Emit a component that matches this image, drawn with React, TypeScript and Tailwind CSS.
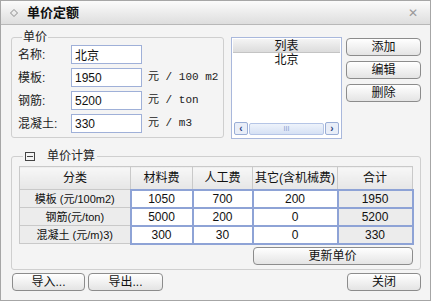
import React from "react";

const font = { fontFamily: '"Liberation Sans", "Noto Sans CJK SC", sans-serif' };

function Btn({ label, className = "" }: { label: string; className?: string }) {
  return (
    <button
      className={`h-[18px] rounded-[4px] border border-[#8c8c8c] bg-gradient-to-b from-[#ffffff] to-[#e4e4e4] text-[12px] leading-none text-[#111] ${className}`}
    >
      {label}
    </button>
  );
}

function Field({ label, value, unit }: { label: string; value: string; unit?: string }) {
  return (
    <div className="flex h-[19px] items-center">
      <span className="w-[53px] text-[12px] text-[#222]">{label}:</span>
      <input
        readOnly
        value={value}
        className="h-[19px] w-[71px] border border-[#9fb0d8] bg-white px-[3px] text-[12px] text-[#111] outline-none"
      />
      {unit && (
        <span className="ml-[6px] font-['Liberation_Mono','Noto_Sans_CJK_SC',monospace] text-[11px] text-[#222]">
          {unit}
        </span>
      )}
    </div>
  );
}

const rows = [
  { name: "模板 (元/100m2)", a: "1050", b: "700", c: "200", total: "1950" },
  { name: "钢筋(元/ton)", a: "5000", b: "200", c: "0", total: "5200" },
  { name: "混凝土 (元/m)3)", a: "300", b: "30", c: "0", total: "330" },
];

export default function App() {
  return (
    <div
      style={font}
      className="flex h-[301px] w-[431px] flex-col border border-[#a6a6a6] bg-[#f4f4f4]"
    >
      {/* Title bar */}
      <div className="flex h-[24px] items-center border-b border-[#b8b8b8] bg-gradient-to-b from-[#fbfbfb] to-[#dedede] pl-[9px] pr-[12px]">
        <svg width="8" height="8" viewBox="0 0 8 8" className="mr-[9px]">
          <path d="M4 0.5 L7.5 4 L4 7.5 L0.5 4 Z" fill="none" stroke="#8a8a8a" strokeWidth="1" />
        </svg>
        <span className="text-[13px] font-bold text-[#111]">单价定额</span>
        <span className="ml-auto text-[12px] text-[#9a9a9a]">✕</span>
      </div>

      <div className="flex flex-col pl-[10px] pt-[5px]">
        {/* Top section */}
        <div className="flex">
          <fieldset className="h-[108px] w-[213px] rounded-[3px] border border-[#cfcfcf] pl-[6px]">
            <legend className="ml-[4px] px-[1px] text-[12px] leading-[14px] text-[#222]">单价</legend>
            <div className="flex flex-col gap-[4px] pt-[1px]">
              <Field label="名称" value="北京" />
              <Field label="模板" value="1950" unit="元 / 100 m2" />
              <Field label="钢筋" value="5200" unit="元 / ton" />
              <Field label="混凝土" value="330" unit="元 / m3" />
            </div>
          </fieldset>

          <div className="ml-[7px] mt-[7px] flex h-[102px] w-[111px] flex-col border border-[#a9b8dc] bg-white p-[1px]">
            <div className="h-[14px] border-b border-[#c4c4c4] bg-gradient-to-b from-[#f4f4f4] to-[#dcdcdc] text-center text-[12px] leading-[14px] text-[#111]">
              列表
            </div>
            <div className="text-center text-[12px] leading-[14px] text-[#111]">北京</div>
            <div className="mt-auto mb-[2px] flex h-[13px] items-center gap-[1px] px-[1px]">
              <div className="flex h-[13px] w-[14px] items-center justify-center rounded-[2px] border border-[#9aaed6] bg-[#e9eef8] text-[10px] font-bold leading-none text-[#2a3f80]">
                ‹
              </div>
              <div className="flex h-[12px] flex-1 items-center justify-center rounded-[2px] border border-[#b5c5e6] bg-gradient-to-b from-[#eef3fb] to-[#d6e1f4] text-[7px] leading-none text-[#8aa0cf]">
                III
              </div>
              <div className="flex h-[13px] w-[14px] items-center justify-center rounded-[2px] border border-[#9aaed6] bg-[#e9eef8] text-[10px] font-bold leading-none text-[#2a3f80]">
                ›
              </div>
            </div>
          </div>

          <div className="ml-[4px] mt-[8px] flex flex-col gap-[5px]">
            <Btn label="添加" className="w-[75px]" />
            <Btn label="编辑" className="w-[75px]" />
            <Btn label="删除" className="w-[75px]" />
          </div>
        </div>

        {/* Calculation section */}
        <fieldset className="mt-[10px] w-[408px] rounded-[3px] border border-[#cfcfcf] pb-[4px] pl-[7px] pr-[6px]">
          <legend className="ml-[4px] flex items-center px-[2px] text-[12px] leading-[14px] text-[#222]">
            <span className="mr-[12px] flex h-[9px] w-[10px] items-center justify-center border border-[#444]">
              <span className="h-[1px] w-[6px] bg-[#444]" />
            </span>
            单价计算
          </legend>

          <table className="mt-[3px] w-[393px] table-fixed border-collapse text-center text-[12px] leading-[14px] text-[#111]">
            <colgroup>
              <col className="w-[111px]" />
              <col className="w-[62px]" />
              <col className="w-[60px]" />
              <col className="w-[85px]" />
              <col className="w-[75px]" />
            </colgroup>
            <thead>
              <tr className="h-[23px]">
                {["分类", "材料费", "人工费", "其它(含机械费)", "合计"].map((h) => (
                  <th
                    key={h}
                    className="border border-[#c9c9c9] bg-gradient-to-b from-[#f7f7f7] to-[#e6e6e6] p-0 font-normal"
                  >
                    {h}
                  </th>
                ))}
              </tr>
            </thead>
            <tbody>
              {rows.map((r) => (
                <tr key={r.name} className="h-[18px]">
                  <td className="h-[18px] border border-[#c9c9c9] bg-[#ececec] p-0 text-[11px] leading-[14px]">{r.name}</td>
                  <td className="h-[18px] border-2 border-[#8ea3d6] bg-white p-0">{r.a}</td>
                  <td className="h-[18px] border-2 border-[#8ea3d6] bg-white p-0">{r.b}</td>
                  <td className="h-[18px] border-2 border-[#8ea3d6] bg-white p-0">{r.c}</td>
                  <td className="h-[18px] border-2 border-[#8ea3d6] bg-[#ececec] p-0">{r.total}</td>
                </tr>
              ))}
            </tbody>
          </table>

          <div className="mt-[2px] flex justify-end pr-[1px]">
            <Btn label="更新单价" className="w-[160px]" />
          </div>
        </fieldset>

        {/* Bottom buttons */}
        <div className="mt-[3px] flex pr-[9px]">
          <Btn label="导入..." className="w-[73px] ml-[1px]" />
          <Btn label="导出..." className="ml-[3px] w-[75px]" />
          <Btn label="关闭" className="ml-auto w-[74px]" />
        </div>
      </div>
    </div>
  );
}
